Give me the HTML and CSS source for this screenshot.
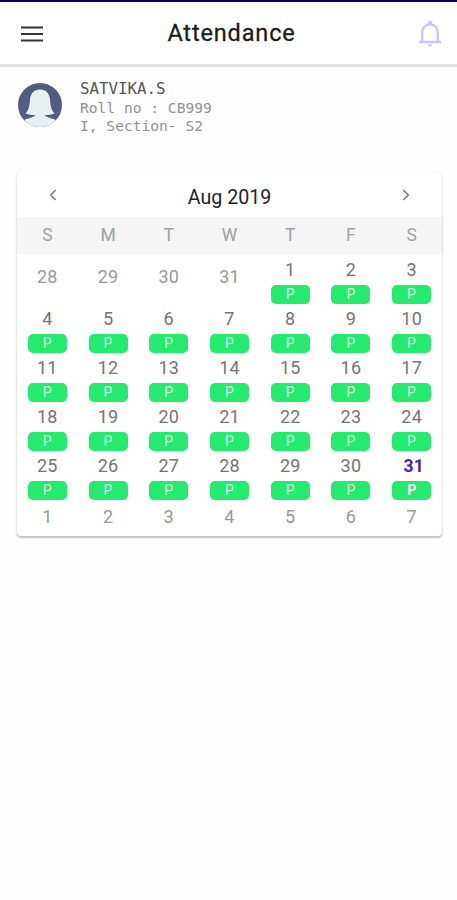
FILE: index.html
```html
<!DOCTYPE html>
<html lang="en">
<head>
    <meta charset="UTF-8">
    <meta name="viewport" content="width=device-width, initial-scale=1.0">
    <title>Attendance</title>
    <link rel="stylesheet" href="styles.css">
</head>
<body>
    <header class="header">
        <svg class="menu-icon" viewBox="0 0 22 16">
            <path d="M0 1.500h22M0 8h22M0 14.500h22" fill="none" stroke="#333" stroke-width="2"/>
        </svg>
        <h1>Attendance</h1>
        <svg class="bell-icon" viewBox="0 0 24 27">
            <path d="M1 22h22M4.200 21.500V12.500a7.800 8.300 0 0 1 15.600 0v9" fill="none" stroke="#cfc2f6" stroke-width="2.400"/>
            <path d="M10 4V2.500a2 2 0 0 1 4 0V4zM9.800 24.500h4.400a2.200 2 0 0 1-4.400 0z" fill="#cfc2f6"/>
        </svg>
    </header>

    <section class="student">
        <svg class="avatar" viewBox="0 0 44 44">
            <clipPath id="round"><circle cx="22" cy="22" r="22"/></clipPath>
            <g clip-path="url(#round)">
                <rect width="44" height="44" fill="#515c84"/>
                <path d="M22 6.500c-6 0-9.500 4-10 10-.5 6-1 10-4.500 14 3 1.500 6 1.500 10 1.500-1 2-6 3-10.500 4.500V44h30v-7.500C32.500 35 27.500 34 26.500 32c4 0 7 0 10-1.500-3.500-4-4-8-4.500-14-.5-6-4-10-10-10z" fill="#e8f0f2"/>
            </g>
        </svg>
        <div class="student-info">
            <div class="name">SATVIKA.S</div>
            <div>Roll no : CB999</div>
            <div>I, Section- S2</div>
        </div>
    </section>

    <main class="calendar">
        <div class="month">
            <svg class="arrow" viewBox="0 0 8 12"><path d="M6.700 1 1.700 6l5 5" fill="none" stroke="#777" stroke-width="1.500"/></svg>
            <span>Aug 2019</span>
            <svg class="arrow" viewBox="0 0 8 12"><path d="m1.300 1 5 5-5 5" fill="none" stroke="#777" stroke-width="1.500"/></svg>
        </div>
        <div class="weekdays">
            <span>S</span><span>M</span><span>T</span><span>W</span><span>T</span><span>F</span><span>S</span>
        </div>
        <div class="days" id="days"></div>
    </main>

    <script>
        const days = document.getElementById('days');

        function addDay(number, className, present) {
            const day = document.createElement('div');
            day.className = 'day ' + className;
            day.innerHTML = `<span>${number}</span>` + (present ? '<span class="badge">P</span>' : '');
            days.appendChild(day);
        }

        // end of July
        for (let i = 28; i <= 31; i++) addDay(i, 'other', false);
        // August
        for (let i = 1; i <= 31; i++) addDay(i, i === 31 ? 'today' : '', true);
        // start of September
        for (let i = 1; i <= 7; i++) addDay(i, 'other', false);
    </script>
</body>
</html>
```
FILE: styles.css
```css
* {
    box-sizing: border-box;
}

body {
    margin: 0;
    min-height: 100vh;
    background: #fefefe;
    border-top: 2px solid #06005c;
    font-family: Roboto, "Liberation Sans", sans-serif;
}

svg {
    display: block;
}

/* Top bar */
.header {
    display: flex;
    align-items: center;
    justify-content: space-between;
    height: 65px;
    padding: 0 15px 0 21px;
    background: #fff;
    border-bottom: 3px solid #e0e0e0;
}

.header h1 {
    margin: 0;
    padding-left: 2px;
    font-size: 23.5px;
    font-weight: 400;
    letter-spacing: 0.85px;
    -webkit-text-stroke: 0.3px #1c1c1c;
    color: #1c1c1c;
}

.menu-icon {
    width: 22px;
    height: 16px;
    margin-top: 1px;
}

.bell-icon {
    width: 24px;
    height: 27px;
}

/* Student */
.student {
    display: flex;
    height: 105px;
    padding: 11px 18px 0;
    gap: 18px;
}

.avatar {
    width: 44px;
    height: 44px;
    margin-top: 5px;
}

.student-info {
    font-family: "DejaVu Sans Mono", monospace;
    font-size: 14.6px;
    line-height: 17.5px;
    color: #929292;
}

.student-info .name {
    font-size: 15.8px;
    line-height: 21px;
    color: #555;
}

/* Calendar */
.calendar {
    width: 425px;
    height: 364px;
    margin: 0 auto 0 17px;
    background: #fff;
    border-radius: 4px;
    box-shadow: 0 1px 2px 1px rgba(0, 0, 0, 0.1), 0 2px 1px rgba(0, 0, 0, 0.14);
}

.month {
    display: flex;
    justify-content: space-between;
    height: 45px;
    padding: 5px 32px 0;
    line-height: 41px;
    font-size: 19.6px;
    color: #222;
}

.arrow {
    width: 8px;
    height: 12px;
    margin-top: 12px;
}

.weekdays,
.days {
    display: grid;
    grid-template-columns: repeat(7, 1fr);
    text-align: center;
}

.weekdays {
    height: 37px;
    line-height: 36px;
    background: #f5f5f5;
    font-size: 17.5px;
    color: #a0a0a0;
}

.days {
    grid-template-rows: repeat(5, 49px) 31px;
    padding-top: 3px;
}

.day {
    display: flex;
    flex-direction: column;
    align-items: center;
    justify-content: center;
    font-size: 18px;
    line-height: 24px;
    letter-spacing: 0.2px;
    color: #747474;
}

.other {
    padding-bottom: 9px;
    color: #999;
}

.other:nth-child(n + 36) {
    padding-bottom: 2px;
}

.badge {
    width: 39px;
    height: 19px;
    margin-top: 3px;
    margin-bottom: 2px;
    border-radius: 5px;
    background: #25ea70;
    font-size: 14px;
    line-height: 19px;
    color: #d8ffe6;
}

.today {
    font-size: 17.5px;
    font-weight: 700;
    letter-spacing: 0;
    color: #4a1fb8;
}

.today > span:first-child {
    padding-left: 4px;
}

.today .badge {
    color: #fff;
}
```
